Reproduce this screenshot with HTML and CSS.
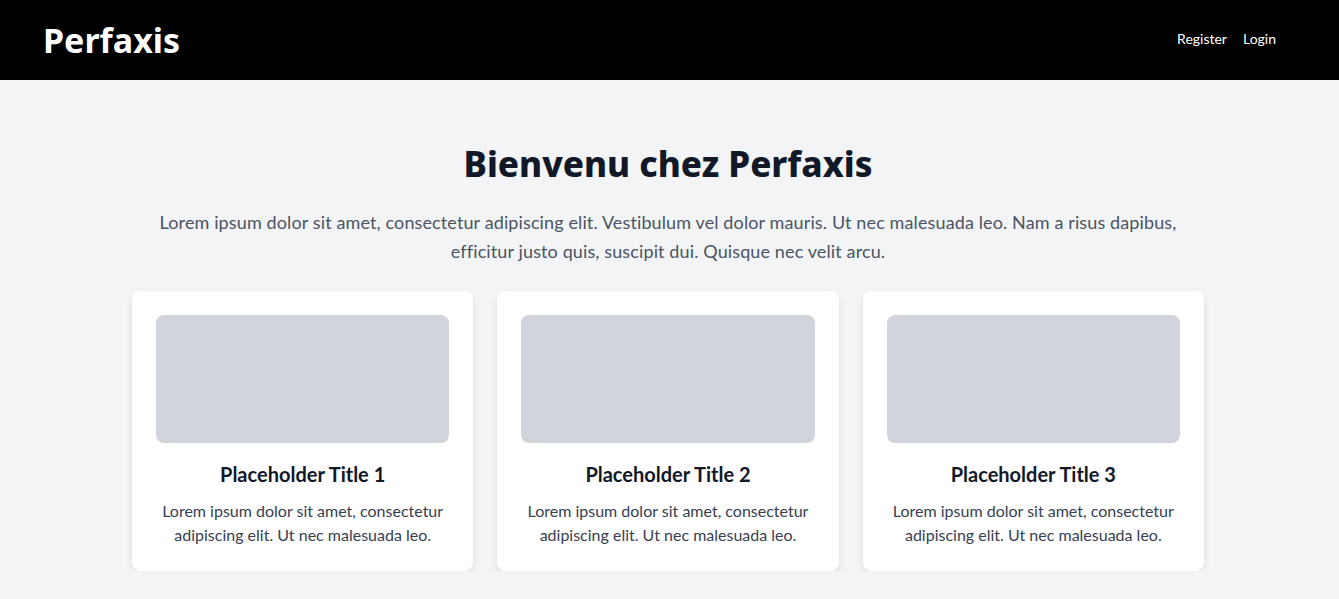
FILE: index.html
```html
<!DOCTYPE html>
<html lang="fr">
<head>
    <meta charset="UTF-8">
    <meta name="viewport" content="width=device-width, initial-scale=1.0">
    <title>Perfaxis</title>
    <link rel="stylesheet" href="styles.css">
</head>
<body>
    <header class="topbar">
        <a href="#" class="logo">Perfaxis</a>
        <nav class="nav">
            <a href="#">Register</a>
            <a href="#">Login</a>
        </nav>
    </header>

    <main class="main">
        <h1 class="title">Bienvenu chez Perfaxis</h1>
        <p class="intro">Lorem ipsum dolor sit amet, consectetur adipiscing elit. Vestibulum vel dolor mauris. Ut nec malesuada leo. Nam a risus dapibus, efficitur justo quis, suscipit dui. Quisque nec velit arcu.</p>

        <div class="cards">
            <div class="card">
                <div class="card-image"></div>
                <h3>Placeholder Title 1</h3>
                <p>Lorem ipsum dolor sit amet, consectetur adipiscing elit. Ut nec malesuada leo.</p>
            </div>
            <div class="card">
                <div class="card-image"></div>
                <h3>Placeholder Title 2</h3>
                <p>Lorem ipsum dolor sit amet, consectetur adipiscing elit. Ut nec malesuada leo.</p>
            </div>
            <div class="card">
                <div class="card-image"></div>
                <h3>Placeholder Title 3</h3>
                <p>Lorem ipsum dolor sit amet, consectetur adipiscing elit. Ut nec malesuada leo.</p>
            </div>
        </div>
    </main>
</body>
</html>
```

FILE: styles.css
```css
body {
    margin: 0;
    font-family: Lato, "Noto Sans", Arial, sans-serif;
    background: #f3f4f6;
    color: #111827;
}
.topbar {
    height: 80px;
    background: #000;
    display: flex;
    align-items: center;
    justify-content: space-between;
    padding: 0 63px 0 43px;
}
.logo {
    color: #fff;
    font-family: "Noto Sans", Arial, sans-serif;
    font-size: 34px;
    font-weight: 700;
    text-decoration: none;
}
.nav {
    display: flex;
    gap: 16px;
    margin-top: -4px;
}
.nav a {
    color: #fff;
    font-size: 14px;
    text-decoration: none;
}
.main {
    max-width: 1072px;
    margin: 0 auto;
    padding: 64px 3px 0 0;
    text-align: center;
}
.title {
    margin: 0 0 24px;
    font-family: "Noto Sans", Arial, sans-serif;
    font-size: 35px;
    line-height: 40px;
    font-weight: 800;
    color: #111827;
}
.intro {
    margin: 0 0 25px;
    font-size: 18px;
    line-height: 29px;
    letter-spacing: 0.12px;
    color: #4b5563;
}
.cards {
    display: grid;
    grid-template-columns: repeat(3, 1fr);
    gap: 24px;
}
.card {
    background: #fff;
    border-radius: 8px;
    padding: 24px;
    box-shadow: 0 4px 8px -1px rgba(0, 0, 0, 0.1), 0 2px 4px -2px rgba(0, 0, 0, 0.1);
}
.card-image {
    height: 128px;
    background: #d1d5db;
    border-radius: 8px;
}
.card h3 {
    margin: 17px 0 11px;
    font-size: 20px;
    line-height: 28px;
    font-weight: 700;
}
.card p {
    margin: 0;
    font-size: 16px;
    line-height: 24px;
    color: #374151;
}
```
